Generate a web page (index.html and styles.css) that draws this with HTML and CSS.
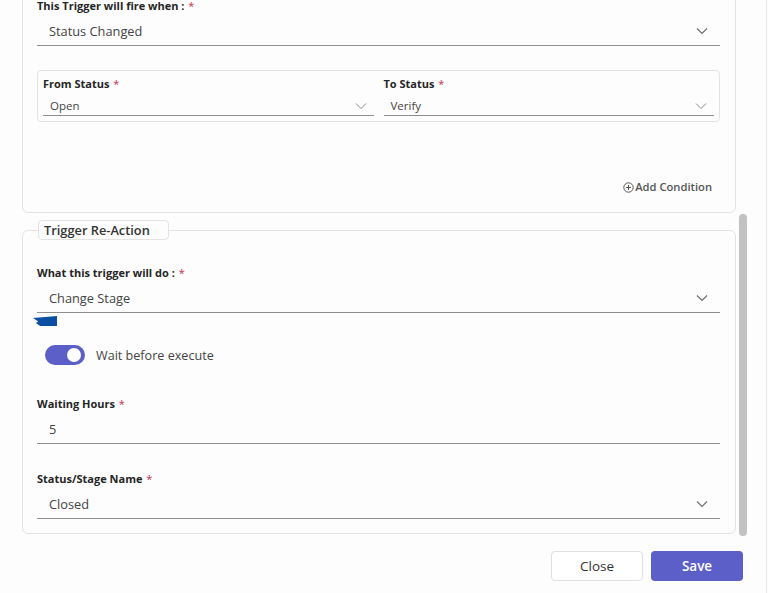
FILE: index.html
```html
<!DOCTYPE html>
<html>
<head>
<meta charset="utf-8">
<link rel="stylesheet" href="styles.css">
</head>
<body>
<div class="page">
  <div class="main">
    <div class="content">
      <section class="card card-top">
        <div class="label">This Trigger will fire when : <span class="req">*</span></div>
        <div class="field">
          <span class="value">Status Changed</span>
          <svg class="chev" width="12" height="8" viewBox="0 0 12 8"><path d="M1 1.5 L6 6.5 L11 1.5" fill="none" stroke="#6b6b6b" stroke-width="1.1"/></svg>
        </div>
        <div class="status-box">
          <div class="status-col">
            <div class="label">From Status <span class="req">*</span></div>
            <div class="field small">
              <span class="value">Open</span>
              <svg class="chev" width="12" height="8" viewBox="0 0 12 8"><path d="M1 1.5 L6 6.5 L11 1.5" fill="none" stroke="#8a8a8a" stroke-width="1"/></svg>
            </div>
          </div>
          <div class="status-col">
            <div class="label">To Status <span class="req">*</span></div>
            <div class="field small">
              <span class="value">Verify</span>
              <svg class="chev" width="12" height="8" viewBox="0 0 12 8"><path d="M1 1.5 L6 6.5 L11 1.5" fill="none" stroke="#8a8a8a" stroke-width="1"/></svg>
            </div>
          </div>
        </div>
        <div class="add-row">
          <span class="add-cond">
            <svg width="11" height="11" viewBox="0 0 11 11"><circle cx="5.5" cy="5.5" r="4.7" fill="none" stroke="#555" stroke-width="1"/><path d="M5.5 3 V8 M3 5.5 H8" stroke="#555" stroke-width="1"/></svg>Add Condition
          </span>
        </div>
      </section>

      <fieldset class="card card-action">
        <legend class="legend">Trigger Re-Action</legend>
        <div class="label">What this trigger will do : <span class="req">*</span></div>
        <div class="field">
          <span class="value">Change Stage</span>
          <svg class="chev" width="12" height="8" viewBox="0 0 12 8"><path d="M1 1.5 L6 6.5 L11 1.5" fill="none" stroke="#6b6b6b" stroke-width="1.1"/></svg>
        </div>
        <div class="focus-mark"></div>
        <div class="toggle-row">
          <span class="toggle"><span class="knob"></span></span>
          <span class="toggle-label">Wait before execute</span>
        </div>
        <div class="label gap-hours">Waiting Hours <span class="req">*</span></div>
        <div class="field">
          <span class="value">5</span>
        </div>
        <div class="label gap-stage">Status/Stage Name <span class="req">*</span></div>
        <div class="field">
          <span class="value">Closed</span>
          <svg class="chev" width="12" height="8" viewBox="0 0 12 8"><path d="M1 1.5 L6 6.5 L11 1.5" fill="none" stroke="#6b6b6b" stroke-width="1.1"/></svg>
        </div>
      </fieldset>
    </div>
    <div class="scrollbar"><div class="thumb"></div></div>
  </div>
  <div class="footer">
    <button class="btn btn-close">Close</button>
    <button class="btn btn-save">Save</button>
  </div>
</div>
</body>
</html>
```

FILE: styles.css
```css
* { box-sizing: border-box; }
html, body {
  margin: 0;
  padding: 0;
  background: #fdfdfd;
}
body {
  font-family: "Open Sans", "Noto Sans", sans-serif;
  color: #242424;
  overflow: hidden;
}
.page {
  width: 767px;
  height: 593px;
  border-right: 1px solid #e8e8e8;
  display: flex;
  flex-direction: column;
}
.main {
  height: 540px;
  display: flex;
  overflow: hidden;
}
.content {
  width: 736px;
  padding-left: 22px;
  flex: none;
}
.card {
  width: 714px;
  border: 1px solid #e3e3e3;
  border-radius: 6px;
  background: #fdfdfd;
  padding: 0 15px 0 14px;
}
.card-top {
  margin-top: -20px;
  padding-top: 17px;
  padding-bottom: 15px;
  height: 233px;
}
.label {
  font-size: 11px;
  font-weight: 700;
  line-height: 16px;
  color: #252525;
  white-space: nowrap;
}
.req {
  color: #c4314b;
  font-weight: 400;
  margin-left: 1px;
}
.field {
  margin-top: 2px;
  height: 30px;
  border-bottom: 1px solid #8f8f8f;
  display: flex;
  align-items: center;
  justify-content: space-between;
  padding: 0 12px 0 12px;
}
.value {
  font-size: 12.8px;
  color: #444;
}
.chev { display: block; }
.field.small {
  margin-top: 4px;
  height: 20px;
  padding: 0 7px 0 7px;
}
.field.small .value { font-size: 11.5px; }
.status-box {
  margin-top: 24px;
  border: 1px solid #e2e2e2;
  border-radius: 4px;
  padding: 5px 5px 5px 5px;
  display: flex;
  gap: 10px;
}
.status-col { flex: 1; }
.add-row {
  margin-top: 57px;
  display: flex;
  justify-content: flex-end;
  padding-right: 8px;
}
.add-cond {
  display: flex;
  align-items: center;
  font-size: 11.2px;
  font-weight: 600;
  color: #555;
  line-height: 16px;
}
.add-cond svg { margin-right: 1px; }
.card-action {
  margin: 7px 0 0 0;
  padding-top: 25px;
  padding-bottom: 14px;
  min-width: 0;
}
.legend {
  width: 131px;
  height: 20px;
  padding: 0 5px;
  margin-left: 1px;
  border: 1px solid #e3e3e3;
  border-radius: 4px;
  font-size: 12.8px;
  font-weight: 600;
  line-height: 18px;
  color: #333;
  background: #fdfdfd;
}
.focus-mark {
  width: 24px;
  height: 10px;
  margin: 3px 0 0 -4px;
  background: #0b4ea2;
  clip-path: polygon(0 20%, 100% 0, 100% 100%, 30% 100%, 12% 70%, 22% 55%);
}
.toggle-row {
  margin-top: 19px;
  margin-left: 8px;
  display: flex;
  align-items: center;
  gap: 11px;
}
.toggle {
  width: 40px;
  height: 20px;
  border-radius: 10px;
  background: #5b5fc7;
  position: relative;
  flex: none;
}
.knob {
  position: absolute;
  right: 4px;
  top: 3px;
  width: 14px;
  height: 14px;
  border-radius: 50%;
  background: #fff;
}
.toggle-label {
  font-size: 12.6px;
  color: #444;
}
.gap-hours { margin-top: 31px; }
.gap-stage { margin-top: 27px; }
.scrollbar {
  width: 12px;
  padding-left: 3px;
}
.thumb {
  margin-top: 214px;
  width: 8px;
  height: 322px;
  border-radius: 4px;
  background: #c2c2c2;
}
.footer {
  display: flex;
  justify-content: flex-end;
  gap: 8px;
  padding: 11px 23px 0 0;
}
.btn {
  width: 92px;
  height: 30px;
  border-radius: 4px;
  font-family: "Open Sans", "Noto Sans", sans-serif;
  font-size: 13.5px;
  font-weight: 600;
  cursor: pointer;
}
.btn-close {
  background: #fff;
  border: 1px solid #e0e0e0;
  color: #333;
  font-weight: 500;
}
.btn-save {
  background: #5b5fc7;
  border: none;
  color: #fff;
}
```
